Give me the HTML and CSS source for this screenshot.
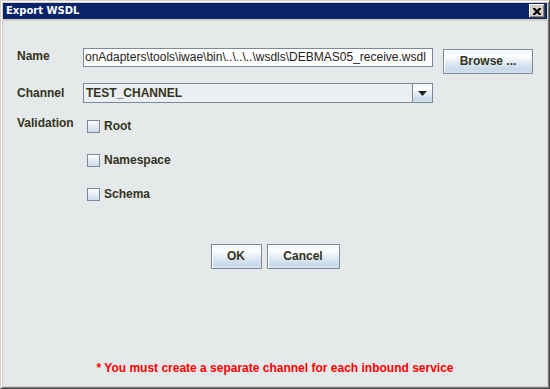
FILE: index.html
```html
<!DOCTYPE html>
<html>
<head>
<meta charset="utf-8">
<link rel="stylesheet" href="styles.css">
</head>
<body>
<div class="window">
  <div class="titlebar">
    <span class="title">Export WSDL</span>
    <span class="close"><svg width="8" height="7" viewBox="0 0 8 7"><path d="M0 0h2l2 2 2-2h2v1l-2.5 2.5L8 6v1H6L4 5 2 7H0V6l2.5-2.5L0 1z" fill="#000"/></svg></span>
  </div>
  <div class="client">
    <div class="form">
      <div class="row row-name">
        <div class="label label-name">Name</div>
        <div class="textfield"><span>onAdapters\tools\iwae\bin\..\..\..\wsdls\DEBMAS05_receive.wsdl</span></div>
        <div class="btn btn-browse">Browse ...</div>
      </div>
      <div class="row row-channel">
        <div class="label label-channel">Channel</div>
        <div class="combo">
          <div class="combo-value">TEST_CHANNEL</div>
          <div class="combo-arrow"><svg width="9" height="5" viewBox="0 0 9 5"><path d="M0 0h9L4.5 5z" fill="#22221a"/></svg></div>
        </div>
      </div>
      <div class="row row-validation">
        <div class="label label-validation">Validation</div>
        <div class="checks">
          <div class="check"><span class="box"></span><span class="check-text">Root</span></div>
          <div class="check"><span class="box"></span><span class="check-text">Namespace</span></div>
          <div class="check"><span class="box"></span><span class="check-text">Schema</span></div>
        </div>
      </div>
    </div>
    <div class="actions">
      <div class="btn btn-ok">OK</div>
      <div class="btn btn-cancel">Cancel</div>
    </div>
    <div class="note">* You must create a separate channel for each inbound service</div>
  </div>
</div>
</body>
</html>
```

FILE: styles.css
```css
html, body {
  margin: 0;
  padding: 0;
}
body {
  font-family: "Liberation Sans", Arial, sans-serif;
  background: #e6e9ea;
}
.window {
  width: 550px;
  height: 389px;
  box-sizing: border-box;
  border: 1px solid;
  border-color: #d4d0c8 #404040 #404040 #d4d0c8;
  box-shadow: inset 1px 1px #ffffff, inset -1px -1px #808080;
  background: #d4d0c8;
  padding: 2px;
  display: flex;
  flex-direction: column;
}
.titlebar {
  height: 16px;
  flex: none;
  background: #0a246a;
  display: flex;
  align-items: center;
  justify-content: space-between;
  padding: 0 2px 0 2px;
}
.title {
  color: #ffffff;
  font-family: "DejaVu Sans", Verdana, sans-serif;
  font-weight: bold;
  font-size: 10px;
  line-height: 16px;
  padding-left: 1px;
}
.close {
  width: 16px;
  height: 14px;
  box-sizing: border-box;
  background: #d4d0c8;
  box-shadow: inset -1px -1px #404040, inset 1px 1px #ffffff, inset -2px -2px #808080;
  display: flex;
  align-items: center;
  justify-content: center;
}
.client {
  flex: 1;
  margin-top: 2px;
  background: #e6e9ea;
  display: flex;
  flex-direction: column;
}
.form {
  padding-left: 14px;
}
.row {
  display: flex;
  align-items: flex-start;
}
.label {
  width: 66px;
  flex: none;
  font-weight: bold;
  font-size: 12px;
  color: #333322;
}
.row-name {
  margin-top: 27px;
}
.label-name {
  line-height: 17px;
}
.textfield {
  width: 350px;
  height: 19px;
  box-sizing: border-box;
  border: 1px solid #7a8a99;
  background: #ffffff;
  overflow: hidden;
  white-space: nowrap;
  font-size: 12px;
  line-height: 17px;
  color: #222222;
  padding-left: 1px;
}
.btn {
  box-sizing: border-box;
  height: 25px;
  border: 1px solid #7a8a99;
  background: linear-gradient(to bottom, #eef3f9 0%, #ffffff 25%, #dde8f3 60%, #c8d9ea 85%, #d6e2ee 100%);
  box-shadow: inset 1px 1px #ffffff;
  font-weight: bold;
  font-size: 12px;
  line-height: 23px;
  text-align: center;
  color: #333322;
}
.btn-browse {
  width: 90px;
  margin-left: 10px;
  margin-top: 1px;
}
.row-channel {
  margin-top: 9px;
}
.label-channel {
  line-height: 20px;
}
.combo {
  width: 350px;
  height: 20px;
  box-sizing: border-box;
  border: 1px solid #7a8a99;
  display: flex;
}
.combo-value {
  flex: 1;
  background: #eceff1;
  font-weight: bold;
  font-size: 12px;
  line-height: 18px;
  padding-left: 2px;
  color: #333322;
}
.combo-arrow {
  width: 19px;
  border-left: 1px solid #7a8a99;
  background: linear-gradient(to bottom, #eef3f9 0%, #ffffff 25%, #dde8f3 60%, #c8d9ea 85%, #d6e2ee 100%);
  display: flex;
  align-items: center;
  justify-content: center;
}
.row-validation {
  margin-top: 12px;
}
.label-validation {
  line-height: 16px;
}
.checks {
  margin-top: 5px;
  margin-left: 4px;
  display: flex;
  flex-direction: column;
  gap: 21px;
}
.check {
  display: flex;
  align-items: center;
  height: 13px;
  gap: 4px;
}
.box {
  width: 13px;
  height: 13px;
  box-sizing: border-box;
  border: 1px solid #7a8a99;
  background: linear-gradient(to bottom, #ffffff 0%, #eaf0f7 40%, #cddcec 100%);
}
.check-text {
  font-weight: bold;
  font-size: 12px;
  line-height: 13px;
  color: #333322;
}
.actions {
  margin-top: 43px;
  display: flex;
  justify-content: center;
  gap: 5px;
}
.btn-ok {
  width: 51px;
}
.btn-cancel {
  width: 73px;
}
.note {
  margin-top: auto;
  margin-bottom: 11px;
  text-align: center;
  font-weight: bold;
  font-size: 12px;
  line-height: 14px;
  color: #ff0000;
}
```
